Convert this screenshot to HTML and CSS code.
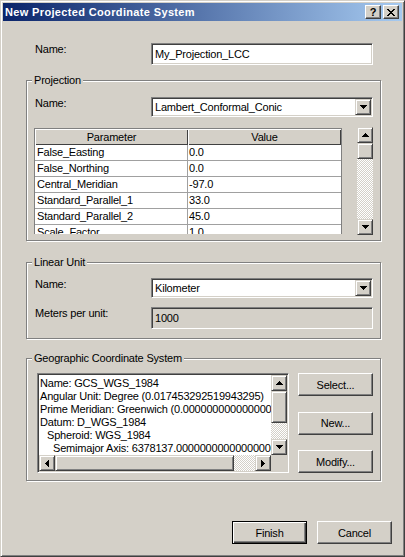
FILE: index.html
```html
<!DOCTYPE html>
<html>
<head>
<meta charset="utf-8">
<title>New Projected Coordinate System</title>
<link rel="stylesheet" href="styles.css">
</head>
<body>
<div class="window">
  <div class="titlebar">
    <span class="title">New Projected Coordinate System</span>
    <div class="tb-buttons">
      <span class="tb-btn help">?</span>
      <span class="tb-btn close"><svg width="8" height="7" viewBox="0 0 8 7"><path d="M0 0h2v1H0zM6 0h2v1H6zM1 1h2v1H1zM5 1h2v1H5zM2 2h4v1H2zM3 3h2v1H3zM2 4h4v1H2zM1 5h2v1H1zM5 5h2v1H5zM0 6h2v1H0zM6 6h2v1H6z"/></svg></span>
    </div>
  </div>

  <div class="content">
    <div class="row name-row">
      <span class="lbl">Name:</span>
      <div class="field edit">My_Projection_LCC</div>
    </div>

    <fieldset class="group proj">
      <legend>Projection</legend>
      <div class="row">
        <span class="lbl">Name:</span>
        <div class="field combo">
          <span class="combo-text">Lambert_Conformal_Conic</span>
          <span class="sbtn dd"><svg width="7" height="4" viewBox="0 0 7 4"><path d="M0 0h7v1H6v1H5v1H4v1H3V3H2V2H1V1H0z"/></svg></span>
        </div>
      </div>
      <div class="grid-row">
        <div class="table">
          <div class="th">Parameter</div><div class="th">Value</div>
          <div class="td">False_Easting</div><div class="td">0.0</div>
          <div class="td">False_Northing</div><div class="td">0.0</div>
          <div class="td">Central_Meridian</div><div class="td">-97.0</div>
          <div class="td">Standard_Parallel_1</div><div class="td">33.0</div>
          <div class="td">Standard_Parallel_2</div><div class="td">45.0</div>
          <div class="td">Scale_Factor</div><div class="td">1.0</div>
        </div>
        <div class="vscroll detached">
          <span class="sbtn"><svg width="7" height="4" viewBox="0 0 7 4"><path d="M3 0h1v1h1v1h1v1h1v1H0V3h1V2h1V1h1z"/></svg></span>
          <span class="sbtn thumb"></span>
          <span class="track"></span>
          <span class="sbtn"><svg width="7" height="4" viewBox="0 0 7 4"><path d="M0 0h7v1H6v1H5v1H4v1H3V3H2V2H1V1H0z"/></svg></span>
        </div>
      </div>
    </fieldset>

    <fieldset class="group unit">
      <legend>Linear Unit</legend>
      <div class="row">
        <span class="lbl">Name:</span>
        <div class="field combo">
          <span class="combo-text">Kilometer</span>
          <span class="sbtn dd"><svg width="7" height="4" viewBox="0 0 7 4"><path d="M0 0h7v1H6v1H5v1H4v1H3V3H2V2H1V1H0z"/></svg></span>
        </div>
      </div>
      <div class="row meters-row">
        <span class="lbl">Meters per unit:</span>
        <div class="field edit disabled">1000</div>
      </div>
    </fieldset>

    <fieldset class="group gcs">
      <legend>Geographic Coordinate System</legend>
      <div class="gcs-row">
        <div class="listbox">
          <div class="list-text">
            <div class="line">Name: GCS_WGS_1984</div>
            <div class="line">Angular Unit: Degree (0.017453292519943295)</div>
            <div class="line">Prime Meridian: Greenwich (0.000000000000000000)</div>
            <div class="line">Datum: D_WGS_1984</div>
            <div class="line ind1">Spheroid: WGS_1984</div>
            <div class="line ind2">Semimajor Axis: 6378137.000000000000000000</div>
          </div>
          <div class="vscroll">
            <span class="sbtn"><svg width="7" height="4" viewBox="0 0 7 4"><path d="M3 0h1v1h1v1h1v1h1v1H0V3h1V2h1V1h1z"/></svg></span>
            <span class="sbtn vthumb"></span>
            <span class="track"></span>
            <span class="sbtn"><svg width="7" height="4" viewBox="0 0 7 4"><path d="M0 0h7v1H6v1H5v1H4v1H3V3H2V2H1V1H0z"/></svg></span>
          </div>
          <div class="hscroll">
            <span class="sbtn"><svg width="4" height="7" viewBox="0 0 4 7"><path d="M3 0h1v7H3V6H2V5H1V4H0V3h1V2h1V1h1z"/></svg></span>
            <span class="sbtn hthumb"></span>
            <span class="track"></span>
            <span class="sbtn"><svg width="4" height="7" viewBox="0 0 4 7"><path d="M0 0h1v1h1v1h1v1h1v1H3v1H2v1H1v1H0z"/></svg></span>
          </div>
          <div class="corner"></div>
        </div>
        <div class="side-buttons">
          <span class="btn">Select...</span>
          <span class="btn">New...</span>
          <span class="btn">Modify...</span>
        </div>
      </div>
    </fieldset>

    <div class="footer">
      <span class="btn default">Finish</span>
      <span class="btn">Cancel</span>
    </div>
  </div>
</div>
</body>
</html>
```

FILE: styles.css
```css
* { box-sizing: border-box; }
html, body { margin: 0; padding: 0; }
body {
  background: #D4D0C8;
  font-family: "Liberation Sans", Arial, sans-serif;
  font-size: 11px;
  letter-spacing: -0.2px;
  color: #000;
}

.window {
  width: 405px;
  height: 557px;
  background: #D4D0C8;
  border: 1px solid;
  border-color: #D4D0C8 #404040 #404040 #D4D0C8;
  box-shadow: inset 1px 1px 0 #fff, inset -1px -1px 0 #808080;
  padding: 2px;
  display: flex;
  flex-direction: column;
}

/* title bar */
.titlebar {
  height: 18px;
  flex: none;
  display: flex;
  align-items: center;
  padding: 0 3px 0 2px;
  background: linear-gradient(to right, #0A246A, #A6CAF0);
}
.title {
  flex: 1;
  color: #fff;
  font-weight: bold;
  letter-spacing: 0.35px;
}
.tb-buttons { display: flex; gap: 2px; }
.tb-btn {
  width: 16px;
  height: 14px;
  display: flex;
  align-items: center;
  justify-content: center;
  background: #D4D0C8;
  border: 1px solid;
  border-color: #fff #404040 #404040 #fff;
  box-shadow: inset -1px -1px 0 #808080;
  font-weight: bold;
  font-size: 11px;
  line-height: 12px;
  letter-spacing: 0;
}

/* content */
.content {
  flex: 1;
  display: flex;
  flex-direction: column;
  padding: 0 10px 0 23px;
}
.row { display: flex; align-items: flex-start; }
.lbl { width: 116px; flex: none; line-height: 13px; }
.name-row { margin-top: 22px; padding-left: 9px; }
.meters-row { margin-top: 9px; }

.field {
  width: 222px;
  border: 1px solid;
  border-color: #808080 #fff #fff #808080;
  box-shadow: inset 1px 1px 0 #404040, inset -1px -1px 0 #D4D0C8;
  background: #fff;
  padding: 1px;
}
.edit {
  height: 22px;
  padding-left: 3px;
  line-height: 18px;
  white-space: nowrap;
}
.disabled { background: #D4D0C8; }
.combo {
  height: 20px;
  display: flex;
  align-items: center;
}
.combo-text { flex: 1; padding-left: 2px; line-height: 16px; }

/* 3d scroll-style button */
.sbtn {
  display: flex;
  align-items: center;
  justify-content: center;
  width: 16px;
  height: 16px;
  flex: none;
  background: #D4D0C8;
  border: 1px solid;
  border-color: #D4D0C8 #404040 #404040 #D4D0C8;
  box-shadow: inset 1px 1px 0 #fff, inset -1px -1px 0 #808080;
}
.sbtn svg { display: block; fill: #000; }

/* group boxes */
.group {
  width: 355px;
  margin: 0;
  padding: 0 7px 0 8px;
  border: 1px solid #808080;
  box-shadow: 1px 1px 0 #fff, inset 1px 1px 0 #fff;
  min-inline-size: 0;
}
.group legend {
  padding: 0 2px;
  margin-left: -3px;
  line-height: 13px;
  background: #D4D0C8;
}
.proj { margin-top: 9px; padding-top: 10px; padding-bottom: 5px; }
.unit { margin-top: 15px; padding-top: 9px; padding-bottom: 9px; }
.gcs { margin-top: 13px; padding-top: 8px; padding-bottom: 7px; }

.grid-row {
  margin-top: 10px;
  display: flex;
  justify-content: space-between;
  align-items: flex-start;
}
.table {
  margin-left: -1px;
  margin-top: 1px;
  width: 308px;
  height: 106px;
  overflow: hidden;
  background: #fff;
  border: 1px solid #808080;
  border-bottom: none;
  display: grid;
  grid-template-columns: 153px 153px;
  grid-auto-rows: 16px;
}
.th {
  background: #D4D0C8;
  text-align: center;
  line-height: 16px;
  box-shadow: inset 1px 1px 0 #fff, inset -1px -1px 0 #404040;
}
.td {
  line-height: 15px;
  padding-left: 2px;
  border-bottom: 1px solid #A0A0A0;
  white-space: nowrap;
  overflow: hidden;
}
.td:nth-child(odd) { border-right: 1px solid #A0A0A0; }
.td:nth-child(even) { padding-left: 1px; }

.vscroll {
  display: flex;
  flex-direction: column;
  width: 16px;
}
.detached { height: 108px; }
.track {
  flex: 1;
  background-color: #fff;
  background-image: conic-gradient(#D4D0C8 25%, #fff 0 50%, #D4D0C8 0 75%, #fff 0);
  background-size: 2px 2px;
}

/* GCS */
.gcs-row { display: flex; align-items: stretch; }
.listbox {
  margin-left: 2px;
  width: 252px;
  height: 100px;
  border: 1px solid;
  border-color: #808080 #fff #fff #808080;
  box-shadow: inset 1px 1px 0 #404040, inset -1px -1px 0 #D4D0C8;
  padding: 1px;
  background: #fff;
  display: grid;
  grid-template-columns: 1fr 16px;
  grid-template-rows: 1fr 16px;
}
.list-text {
  padding: 2px 0 0 1px;
  overflow: hidden;
}
.line { line-height: 13px; white-space: nowrap; }
.ind1 { padding-left: 7px; }
.ind2 { padding-left: 13px; }
.listbox .vscroll { height: 80px; }
.vthumb { height: 32px; }
.hscroll { display: flex; height: 16px; }
.hthumb { width: 179px; height: 16px; }
.hscroll .track { flex: 1; }
.corner { background: #D4D0C8; }

.side-buttons {
  margin-left: 9px;
  display: flex;
  flex-direction: column;
  justify-content: space-between;
}
.btn {
  width: 75px;
  height: 23px;
  display: flex;
  align-items: center;
  justify-content: center;
  background: #D4D0C8;
  border: 1px solid;
  border-color: #fff #404040 #404040 #fff;
  box-shadow: inset -1px -1px 0 #808080;
}
.btn.default {
  border-color: #000;
  box-shadow: inset 1px 1px 0 #fff, inset -1px -1px 0 #404040, inset -2px -2px 0 #808080;
}

.footer {
  margin-top: 40px;
  display: flex;
  justify-content: flex-end;
  gap: 10px;
}
```
